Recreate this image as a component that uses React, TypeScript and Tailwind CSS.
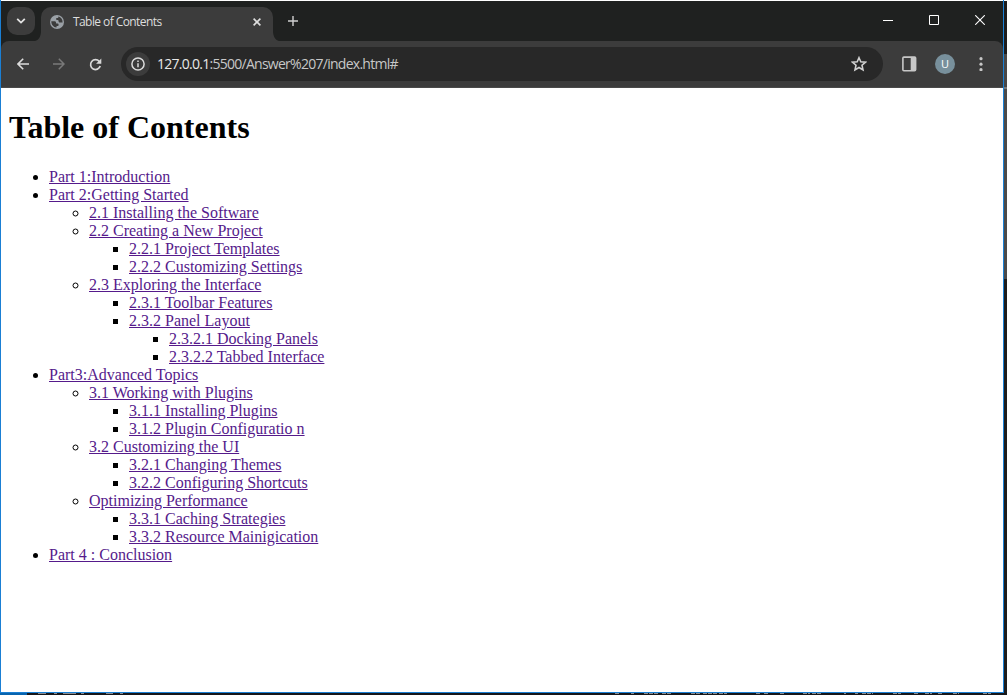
import { useState } from "react";

type Item = { label: string; children?: Item[] };

const contents: Item[] = [
  { label: "Part 1:Introduction" },
  {
    label: "Part 2:Getting Started",
    children: [
      { label: "2.1 Installing the Software" },
      {
        label: "2.2 Creating a New Project",
        children: [{ label: "2.2.1 Project Templates" }, { label: "2.2.2 Customizing Settings" }],
      },
      {
        label: "2.3 Exploring the Interface",
        children: [
          { label: "2.3.1 Toolbar Features" },
          {
            label: "2.3.2 Panel Layout",
            children: [{ label: "2.3.2.1 Docking Panels" }, { label: "2.3.2.2 Tabbed Interface" }],
          },
        ],
      },
    ],
  },
  {
    label: "Part3:Advanced Topics",
    children: [
      {
        label: "3.1 Working with Plugins",
        children: [{ label: "3.1.1 Installing Plugins" }, { label: "3.1.2 Plugin Configuratio n" }],
      },
      {
        label: "3.2 Customizing the UI",
        children: [{ label: "3.2.1 Changing Themes" }, { label: "3.2.2 Configuring Shortcuts" }],
      },
      {
        label: "Optimizing Performance",
        children: [{ label: "3.3.1 Caching Strategies" }, { label: "3.3.2 Resource Mainigication" }],
      },
    ],
  },
  { label: "Part 4 : Conclusion" },
];

const markers = ["list-disc", "list-[circle]", "list-[square]", "list-[square]"];

function TocList({ items, level = 0 }: { items: Item[]; level?: number }) {
  return (
    <ul className={`pl-10 ${markers[level]}`}>
      {items.map((item) => (
        <li key={item.label} className="leading-[18px]">
          <a href="#" className="text-[#551a8b] underline whitespace-nowrap">
            {item.label}
          </a>
          {item.children && <TocList items={item.children} level={level + 1} />}
        </li>
      ))}
    </ul>
  );
}

function TabStrip() {
  return (
    <div className="flex h-10 bg-[#1f2120] text-[#dedede]">
      <button className="ml-1.5 mt-1.5 grid size-7 place-items-center rounded-[10px] bg-[#3c3c3c]">
        <svg width="10" height="8" viewBox="0 0 10 8" fill="none" stroke="#e3e3e3" strokeWidth="1.8">
          <path d="M1.2 1.8 5 5.6l3.8-3.8" />
        </svg>
      </button>
      <svg className="mt-[30px]" width="6" height="10" viewBox="0 0 6 10">
        <path d="M6 0v10H0C4 9 6 5 6 0Z" fill="#3c3c3c" />
      </svg>
      <div className="mt-1.5 flex h-[34px] w-[232px] items-center rounded-t-[10px] bg-[#3c3c3c] pb-[5px] pl-[9px] pr-3">
        <svg width="14" height="14" viewBox="0 0 14 14">
          <circle cx="7" cy="7" r="7" fill="#9aa0a6" />
          <path d="M1.3 6.300h3.200c1 0 1.500.6 1.500 1.400 0 .7.500.9 1.300.9.9 0 1.300.5 1.300 1.300 0 .9-.8 1.200-1.500 1.200-.5 0-.6.5-.6 1.400C3.500 12.300 1.300 9.800 1.300 6.300ZM8.300 1.500c.2 1-.2 1.500-1.100 1.500-.9 0-1.100.4-1.100 1.100 0 .7.5 1 1.300 1 .9 0 1.200.4 1.200 1.200 0 .9.500 1.200 1.400 1.200h2.600C12.700 4.400 11 2.200 8.300 1.500Z" fill="#3c3c3c" />
        </svg>
        <span className="ml-[9px] flex-1 whitespace-nowrap text-[12px] tracking-[-0.58px]">Table of Contents</span>
        <svg width="8" height="8" viewBox="0 0 8 8" stroke="#dedede" strokeWidth="1.6">
          <path d="m.6.6 6.800 6.800M7.400.6.6 7.400" />
        </svg>
      </div>
      <svg className="mt-[30px]" width="6" height="10" viewBox="0 0 6 10">
        <path d="M0 0v10h6C2 9 0 5 0 0Z" fill="#3c3c3c" />
      </svg>
      <svg className="ml-[9px] mt-[15px]" width="10" height="10" viewBox="0 0 10 10" stroke="#d0d0d0" strokeWidth="1.400">
        <path d="M5 0v10M0 5h10" />
      </svg>
      <div className="ml-auto mr-[18px] mt-3.5 flex gap-9">
        <svg width="10" height="10" viewBox="0 0 10 10" stroke="#fff"><path d="M0 5.500h10" /></svg>
        <svg width="10" height="10" viewBox="0 0 10 10" fill="none" stroke="#fff"><path d="M.5.5h9v9h-9Z" /></svg>
        <svg width="10" height="10" viewBox="0 0 10 10" stroke="#fff" strokeWidth="1.100"><path d="m.2.2 9.600 9.600M9.800.2.2 9.800" /></svg>
      </div>
    </div>
  );
}

function Toolbar({ starred, onStar }: { starred: boolean; onStar: () => void }) {
  return (
    <div className="bg-[#1f2120]">
      <div className="flex h-[47px] items-center rounded-t-[8px] border-b border-[#4a4a4a] bg-[#3c3c3c] pl-4">
        <svg width="12" height="12" viewBox="0 0 12 12" fill="none" stroke="#dcdcdc" strokeWidth="1.600">
          <path d="M12 6H1.200M6.200.8 1 6l5.200 5.200" />
        </svg>
        <svg className="ml-6" width="12" height="12" viewBox="0 0 12 12" fill="none" stroke="#797979" strokeWidth="1.500">
          <path d="M0 6h10.800M5.800.8 11 6l-5.200 5.200" />
        </svg>
        <svg className="ml-6" width="13" height="13" viewBox="0 0 13 13">
          <path d="M10.300 3.500A4.900 4.900 0 1 0 11.200 8" fill="none" stroke="#d8d8d8" strokeWidth="1.700" />
          <path d="M12.300.5v5.200H7.100Z" fill="#d8d8d8" />
        </svg>
        <div className="ml-[19px] flex h-[34px] w-[762px] items-center rounded-full bg-[#282828] pl-[5px] pr-4">
          <div className="grid size-6 place-items-center rounded-full bg-[#3c3c3c]">
            <svg width="14" height="14" viewBox="0 0 14 14" fill="none" stroke="#dcdcdc" strokeWidth="1.500">
              <circle cx="7" cy="7" r="6.100" />
              <path d="M7 6.200v4M7 3.500v1.500" />
            </svg>
          </div>
          <span className="ml-[7px] flex-1 whitespace-nowrap pb-0.5 text-[14px] tracking-[-0.73px] text-[#c7c7c7]">
            <span className="text-[#e8e8e8]">127.0.0.1</span>:5500/Answer%207/index.html#
          </span>
          <button onClick={onStar} aria-label="Bookmark">
            <svg width="16" height="16" viewBox="0 0 16 16" fill={starred ? "#d0d0d0" : "none"} stroke="#d0d0d0" strokeWidth="1.600">
              <path d="m8 1.700 1.800 4.100 4.700.4-3.500 3 1 4.700L8 11.500l-4 2.400 1-4.700-3.500-3 4.700-.4Z" />
            </svg>
          </button>
        </div>
        <svg className="ml-[19px]" width="15" height="16" viewBox="0 0 15 16">
          <rect x=".9" y="1.100" width="12.700" height="13.600" rx="1" fill="none" stroke="#c7c7c7" strokeWidth="1.600" />
          <path d="M8.700 1.500h5v13h-5Z" fill="#c7c7c7" />
        </svg>
        <div className="ml-[18px] grid size-5 place-items-center rounded-full bg-[#78909c] pb-px text-[11px] font-medium leading-none text-white">U</div>
        <svg className="ml-6" width="4" height="14" viewBox="0 0 4 14" fill="#c7c7c7">
          <circle cx="2" cy="1.700" r="1.600" />
          <circle cx="2" cy="7.200" r="1.600" />
          <circle cx="2" cy="12.700" r="1.600" />
        </svg>
      </div>
    </div>
  );
}

export default function App() {
  const [starred, setStarred] = useState(false);
  return (
    <div className="flex h-[695px] w-[1007px] flex-col overflow-hidden bg-[#16171a]">
      <div className="flex h-[693px]">
        <div className="w-[1004px] border-x border-b border-[#1a7fd4] bg-white pt-px">
          <header className="font-['Open_Sans',sans-serif]">
            <TabStrip />
            <Toolbar starred={starred} onStar={() => setStarred(!starred)} />
          </header>
          <main className="px-2 font-['Liberation_Serif',serif] text-[16px] text-black">
            <h1 className="mb-[23px] mt-[21px] text-[32px] font-bold leading-9">Table of Contents</h1>
            <TocList items={contents} />
          </main>
        </div>
        <div className="flex w-[3px] flex-col bg-[#1c1c1c]">
          <div className="h-px bg-white" />
          <div className="h-[53px]" />
          <div className="h-[33px] bg-[#484848]" />
          <div className="h-0.5 bg-[#777]" />
          <div className="h-[190px] bg-[#4a4a4a]" />
        </div>
      </div>
      <div className="flex h-0.5 bg-[#16171a]">
        <div className="w-[27px] bg-[#0864ae]" />
        <svg width="980" height="2" viewBox="0 0 980 2" stroke="#8b8d91">
          <path d="M11 .5h8M27 .5h3M36 .5h13M54 .5h3M79 .5h7M93 .5h3" />
          <path d="M588 .5h5M604 .5h3M617 .5h14M635 .5h10M664 .5h10M676 .5h14M692 .5h8M729 .5h4M737 .5h4M753 .5h4M776 .5h7M785 .5h10M817 .5h2M828 .5h3M835 .5h11M866 .5h8M887 .5h4M898 .5h7M911 .5h5M926 .5h6M956 .5h8" strokeDasharray="4 1" />
        </svg>
      </div>
    </div>
  );
}
